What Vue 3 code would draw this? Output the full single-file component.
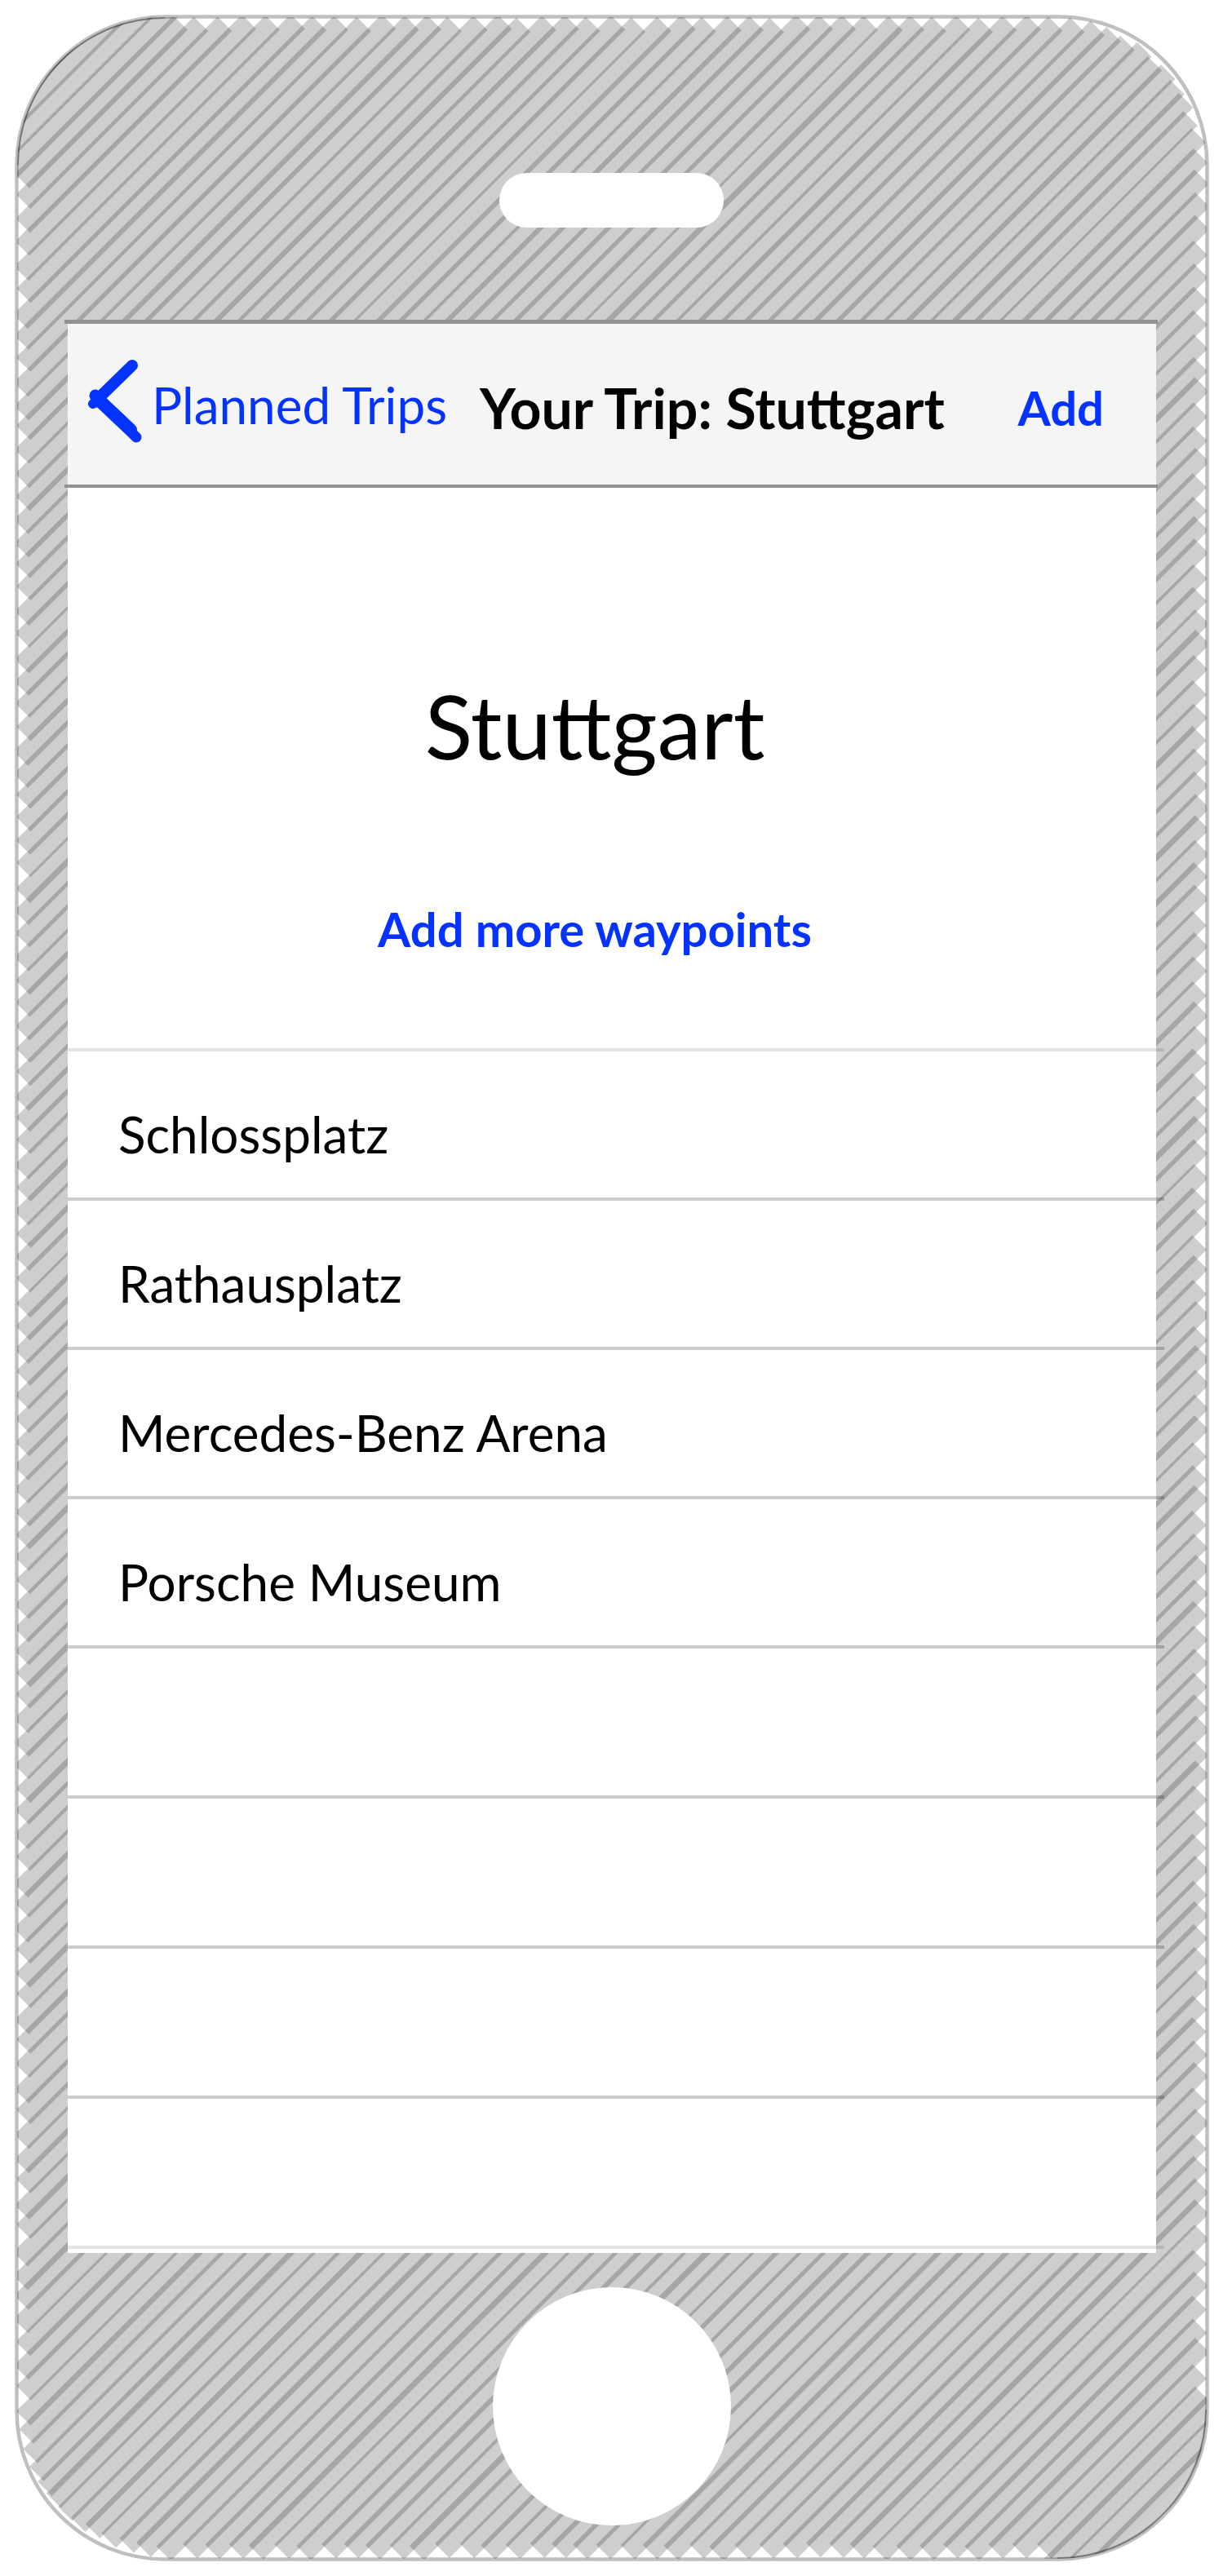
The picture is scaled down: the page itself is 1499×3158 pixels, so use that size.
<script setup>
const waypoints = ['Schlossplatz', 'Rathausplatz', 'Mercedes-Benz Arena', 'Porsche Museum']
const emptyRows = 4

// Marker strokes of the phone body. Neighbours overlap, which gives the dark stripes.
const PITCH = 28.284
const box = { left: 27, top: 28, right: 1472, bottom: 3129, radius: 174 }

function inside(x, y) {
  if (x < box.left || x > box.right || y < box.top || y > box.bottom) return false
  const cx = Math.min(Math.max(x, box.left + box.radius), box.right - box.radius)
  const cy = Math.min(Math.max(y, box.top + box.radius), box.bottom - box.radius)
  return Math.hypot(x - cx, y - cy) <= box.radius
}

function jitter(n) {
  const v = Math.sin(n * 12.9898) * 43758.5453
  return (v - Math.floor(v)) * 2 - 1
}

const strokes = []
for (let k = -14; k < 142; k++) {
  const sum = 502.8 + PITCH * k + jitter(k + 40) * 1.8
  let x1
  let x2
  if (sum < 232 || sum > 4418) {
    x1 = sum < 232 ? -20 : sum - 3180
    x2 = sum < 232 ? sum + 20 : 1520
  } else {
    for (let x = 0; x <= 1499; x++) {
      if (inside(x, sum - x)) {
        if (x1 === undefined) x1 = x
        x2 = x
      }
    }
    x1 += jitter(k + 300) * 2
    x2 += jitter(k + 700) * 2
  }
  strokes.push({ x1, y1: sum - x1, x2, y2: sum - x2 })
}
</script>

<template>
  <div class="phone">
    <svg class="body-art" viewBox="0 0 1499 3158" preserveAspectRatio="none" aria-hidden="true">
      <defs>
        <clipPath id="body-shape">
          <rect x="21" y="21" width="1458" height="3116" rx="181" />
        </clipPath>
      </defs>
      <g clip-path="url(#body-shape)" stroke="#000" stroke-opacity="0.192" stroke-width="25">
        <line v-for="(s, i) in strokes" :key="i" :x1="s.x1" :y1="s.y1" :x2="s.x2" :y2="s.y2" />
      </g>
      <g fill="none" stroke="#000" stroke-opacity="0.25">
        <rect x="20.5" y="20.5" width="1459" height="3117" rx="182" stroke-width="4.5" />
        <path d="M22 202 A180 180 0 0 1 202 22 M1478 2954 A182 182 0 0 1 1296 3136" stroke-width="2" />
      </g>
    </svg>

    <div class="bezel top"><span class="speaker"></span></div>

    <main class="screen">
      <header class="navbar">
        <a class="back" href="#trips">
          <svg class="chevron" viewBox="0 0 66 110" aria-hidden="true">
            <g fill="none" stroke="#0433ff" stroke-linecap="round" stroke-linejoin="round">
              <path d="M54 7 L13 47" stroke-width="14" />
              <path d="M15 51 L52 86" stroke-width="16" />
              <path d="M52 88 L59 95" stroke-width="13" />
              <path d="M9 44 L14 48" stroke-width="15" />
              <path d="M6 54 L14 50" stroke-width="12" />
            </g>
          </svg>
          <span>Planned Trips</span>
        </a>
        <h1 class="title">Your Trip: Stuttgart</h1>
        <button class="add" type="button">Add</button>
      </header>

      <section class="hero">
        <h2 class="city">Stuttgart</h2>
        <button class="more" type="button">Add more waypoints</button>
      </section>

      <ul class="list">
        <li v-for="name in waypoints" :key="name" class="row">{{ name }}</li>
        <li v-for="n in emptyRows" :key="n" class="row empty" aria-hidden="true"></li>
      </ul>
    </main>

    <div class="bezel bottom"><span class="home"></span></div>
  </div>
</template>

<style>
body {
  margin: 0;
  background: #fff;
}
</style>

<style scoped>
.phone {
  position: relative;
  display: flex;
  flex-direction: column;
  font-family: Lato, "Liberation Sans", sans-serif;
  color: #000;
}

.body-art {
  position: absolute;
  inset: 0;
  width: 100%;
  height: 100%;
}

.bezel {
  position: relative;
  display: flex;
  justify-content: center;
}

.top {
  padding: 212px 0 113px;
}

.speaker {
  width: 275px;
  height: 67px;
  border-radius: 34px;
  background: #fff;
}

.bottom {
  padding: 42px 0 62px;
}

.home {
  width: 292px;
  height: 292px;
  border-radius: 50%;
  background: #fff;
}

.screen {
  position: relative;
  margin: 0 82px 0 83px;
  padding-bottom: 5px;
  background: #fff;
}

.navbar {
  display: flex;
  align-items: center;
  height: 197px;
  margin: 0 -2px 0 -4px;
  padding: 0 66px 0 29px;
  border-top: 5px solid #929292;
  border-bottom: 4px solid #929292;
  background: linear-gradient(#f5f5f5, #f5f5f5) 4px 0 / calc(100% - 6px) 100% no-repeat;
  white-space: nowrap;
}

.back {
  display: flex;
  align-items: center;
  gap: 12px;
  color: #0433ff;
  font-size: 62px;
  line-height: 84px;
  text-decoration: none;
}

.chevron {
  width: 66px;
  height: 110px;
}

.title {
  margin: 0 0 0 40px;
  padding-top: 8px;
  font-size: 68px;
  line-height: 84px;
}

button {
  padding: 0;
  border: 0;
  background: none;
  color: #0433ff;
  font: bold 58px/84px Lato, "Liberation Sans", sans-serif;
  cursor: pointer;
}

.add {
  margin-left: auto;
  padding-top: 8px;
}

.hero {
  display: flex;
  flex-direction: column;
  align-items: center;
  gap: 128px;
  padding: 212px 42px 104px 0;
}

.city {
  margin: 0;
  font-size: 108px;
  font-weight: normal;
  line-height: 159px;
}

.list {
  margin: 0 -10px 0 0;
  padding: 0;
  border-top: 4px solid rgba(0, 0, 0, 0.11);
  list-style: none;
}

.row {
  box-sizing: border-box;
  height: 183px;
  padding: 59px 0 0 62px;
  border-bottom: 4px solid rgba(0, 0, 0, 0.2);
  font-size: 62px;
  line-height: 84px;
}

.empty {
  height: 184px;
}

.row:last-child {
  border-bottom-color: rgba(0, 0, 0, 0.11);
}
</style>
